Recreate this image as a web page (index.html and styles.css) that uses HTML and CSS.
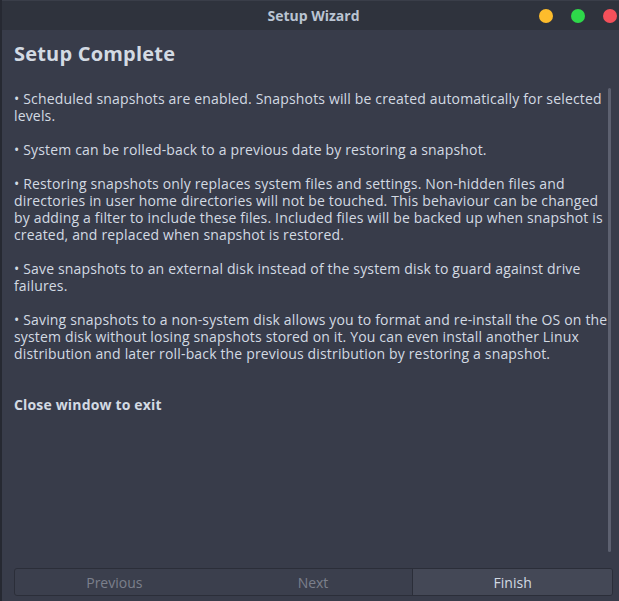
FILE: index.html
```html
<!DOCTYPE html>
<html>
<head>
<meta charset="utf-8">
<title>Setup Wizard</title>
<link rel="stylesheet" href="styles.css">
</head>
<body>
<div class="window">
  <header class="titlebar">
    <span class="title">Setup Wizard</span>
    <div class="controls">
      <span class="dot dot-min"></span>
      <span class="dot dot-max"></span>
      <span class="dot dot-close"></span>
    </div>
  </header>
  <main class="body">
    <div class="scroll-area">
      <div class="content">
        <h1 class="heading">Setup Complete</h1>
        <p class="para">• Scheduled snapshots are enabled. Snapshots will be created automatically for selected levels.</p>
        <p class="para">• System can be rolled-back to a previous date by restoring a snapshot.</p>
        <p class="para">• Restoring snapshots only replaces system files and settings. Non-hidden files and directories in user home directories will not be touched. This behaviour can be changed by adding a filter to include these files. Included files will be backed up when snapshot is created, and replaced when snapshot is restored.</p>
        <p class="para">• Save snapshots to an external disk instead of the system disk to guard against drive failures.</p>
        <p class="para">• Saving snapshots to a non-system disk allows you to format and re-install the OS on the system disk without losing snapshots stored on it. You can even install another Linux distribution and later roll-back the previous distribution by restoring a snapshot.</p>
        <p class="closing">Close window to exit</p>
      </div>
      <div class="scrollbar"><div class="thumb"></div></div>
    </div>
    <div class="actions">
      <button class="btn btn-disabled">Previous</button>
      <button class="btn btn-disabled">Next</button>
      <button class="btn btn-active">Finish</button>
    </div>
  </main>
</div>
</body>
</html>
```

FILE: styles.css
```css
* { box-sizing: border-box; }
html, body {
  margin: 0;
  padding: 0;
  width: 619px;
  height: 601px;
  overflow: hidden;
  background: #383c4a;
}
.window {
  width: 619px;
  height: 601px;
  display: flex;
  flex-direction: column;
  border-left: 2px solid #262932;
  font-family: "Open Sans", "Noto Sans", sans-serif;
  color: #d3dae3;
}
.titlebar {
  height: 30px;
  flex: none;
  background: #2f333d;
  display: flex;
  align-items: center;
  justify-content: center;
  position: relative;
  border-top: 1px solid #3a3e49;
}
.title {
  font-size: 14px;
  font-weight: 700;
  color: #bac4d2;
  margin-left: 6px;
}
.controls {
  position: absolute;
  right: 2px;
  top: 8px;
  display: flex;
  gap: 18px;
}
.dot {
  width: 14px;
  height: 14px;
  border-radius: 50%;
  display: block;
}
.dot-min { background: #fdbc2c; }
.dot-max { background: #2ed84a; }
.dot-close { background: #f4505a; }
.body {
  flex: 1;
  display: flex;
  flex-direction: column;
  padding: 0 6px 5px 12px;
}
.scroll-area {
  flex: 1;
  display: flex;
  min-height: 0;
}
.content {
  flex: 1;
  padding-top: 12px;
  letter-spacing: 0.16px;
}
.heading {
  margin: 0 0 24px 0;
  font-size: 20px;
  line-height: 24px;
  font-weight: 700;
  color: #d3dae3;
  letter-spacing: 0.2px;
}
.para {
  margin: 0 0 17px 0;
  font-size: 14px;
  line-height: 17px;
}
.closing {
  margin: 34px 0 0 0;
  font-size: 14px;
  line-height: 17px;
  font-weight: 700;
}
.scrollbar {
  width: 5px;
  flex: none;
  display: flex;
  justify-content: flex-start;
  padding-top: 58px;
  padding-bottom: 16px;
}
.thumb {
  width: 3px;
  height: 100%;
  background: #5d6170;
  border-radius: 2px;
}
.actions {
  display: flex;
  height: 28px;
  border: 1px solid #2b2e39;
  border-radius: 3px;
  overflow: hidden;
  background: #3b3f4d;
}
.btn {
  flex: 1;
  border: none;
  background: transparent;
  font-family: "Open Sans", "Noto Sans", sans-serif;
  font-size: 14px;
  padding: 0;
}
.btn-disabled { color: #7b808c; }
.btn-active {
  background: #444856;
  color: #d3dae3;
  border-left: 1px solid #2b2e39;
}
```
